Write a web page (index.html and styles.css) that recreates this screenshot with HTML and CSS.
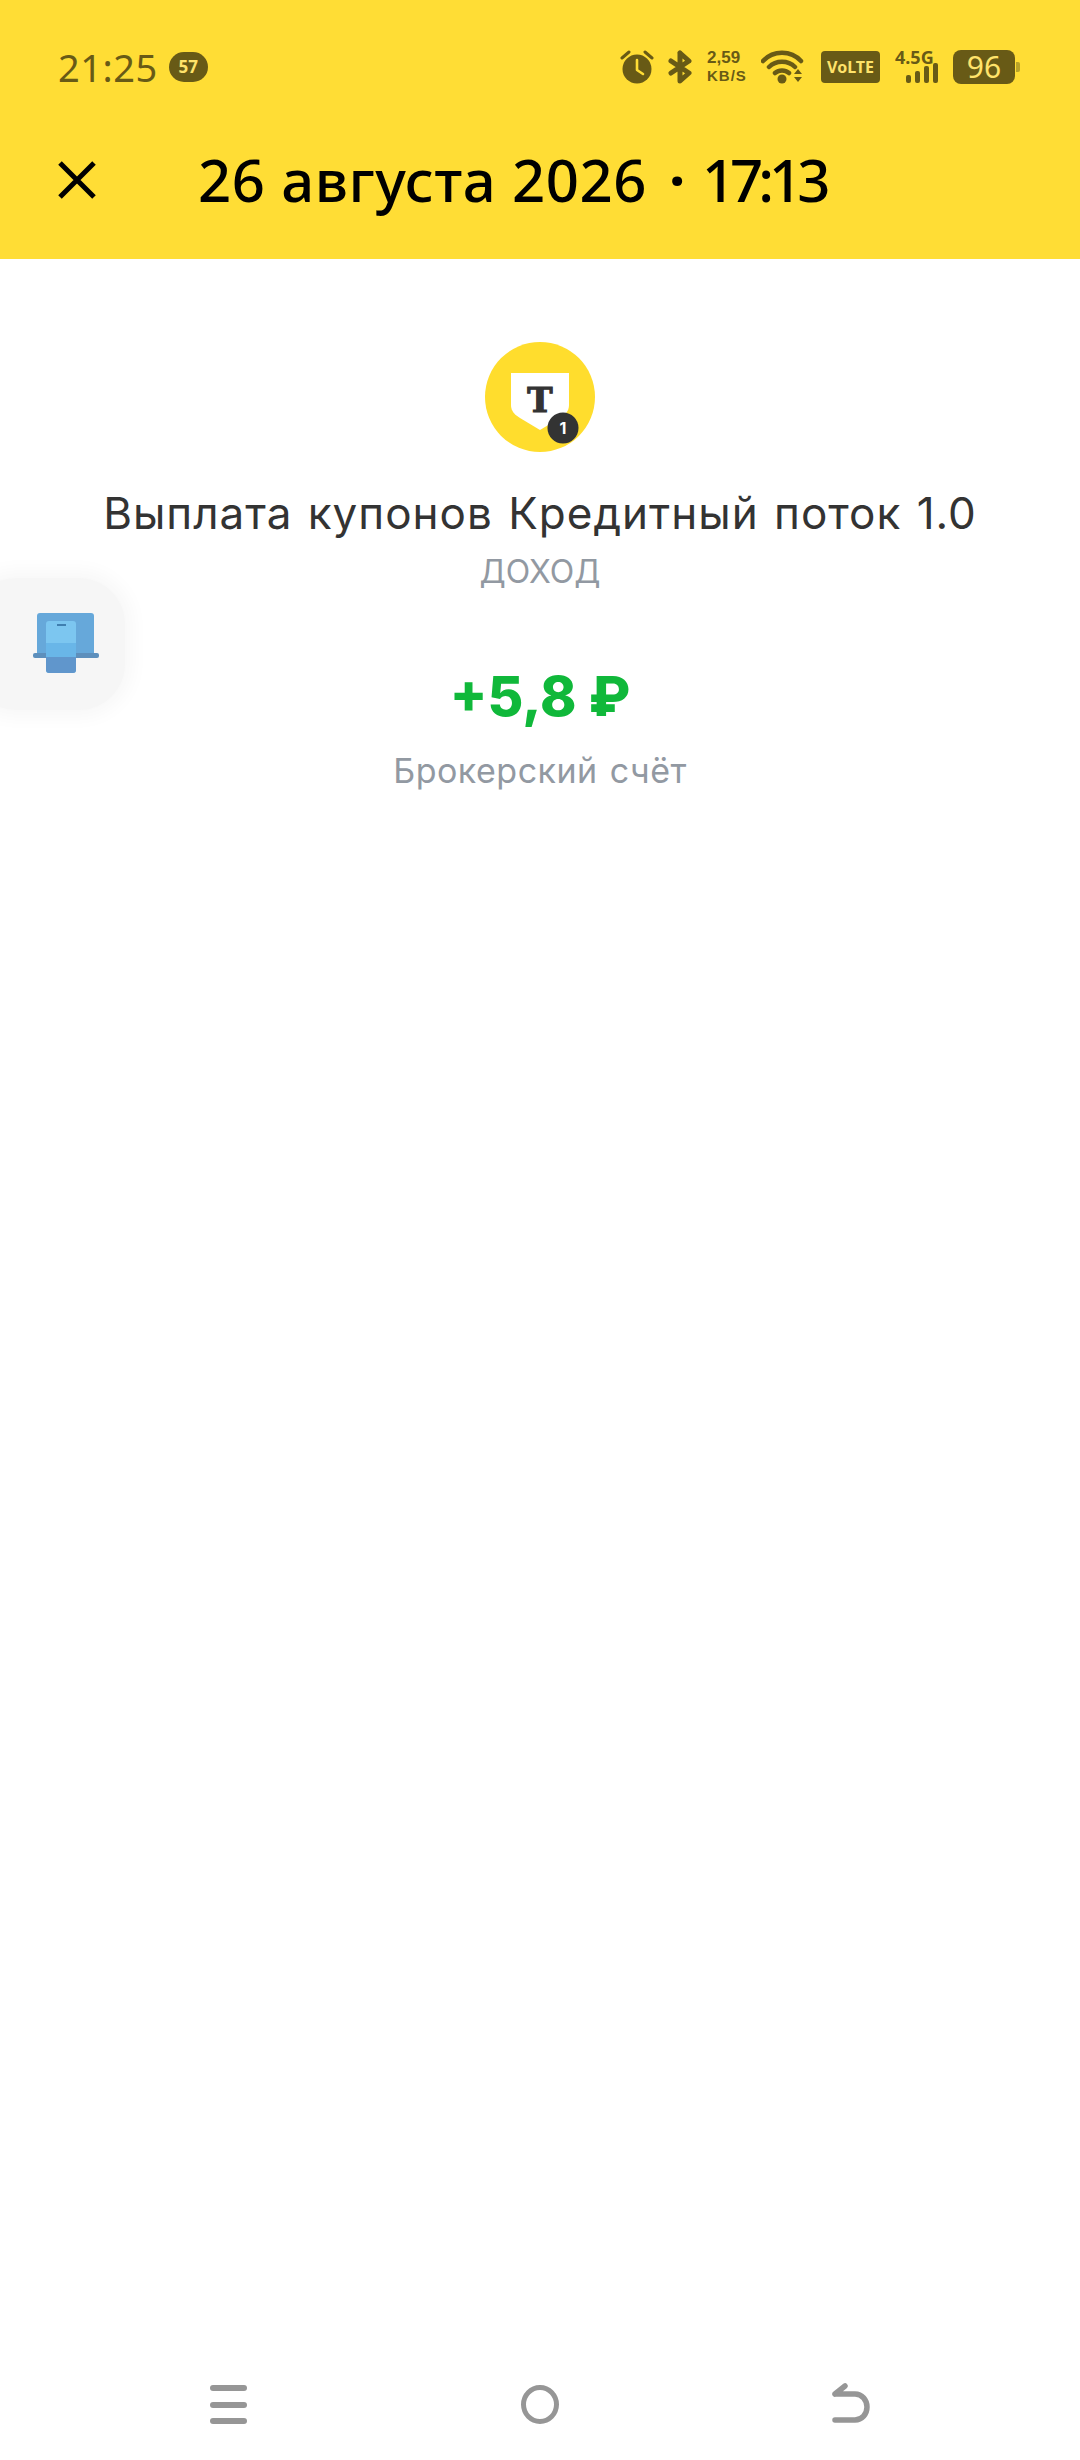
FILE: index.html
```html
<!DOCTYPE html>
<html lang="ru">
<head>
    <meta charset="UTF-8">
    <meta name="viewport" content="width=device-width, initial-scale=1.0">
    <title>Выплата купонов</title>
    <link rel="stylesheet" href="styles.css">
</head>
<body>
    <div class="screen">
        <header class="header">
            <div class="status-bar">
                <div class="status-left">
                    <span class="time">21:25</span>
                    <span class="notif-badge">57</span>
                </div>
                <div class="status-right">
                    <svg class="ico-alarm" width="34" height="34" viewBox="0 0 34 34">
                        <circle cx="17" cy="19" r="14.500" fill="#685a16"/>
                        <path d="M17 10v10l6 4" fill="none" stroke="#ffdd35" stroke-width="2.600" stroke-linecap="round" stroke-linejoin="round"/>
                        <path d="M2 8l7-6M32 8l-7-6" fill="none" stroke="#685a16" stroke-width="3" stroke-linecap="round"/>
                    </svg>
                    <svg class="ico-bt" width="24" height="34" viewBox="0 0 24 34">
                        <path d="M12 3v28l9-8-18-12M12 3l9 8-18 12" fill="none" stroke="#685a16" stroke-width="5" stroke-linejoin="round" stroke-linecap="round"/>
                    </svg>
                    <div class="net-speed">
                        <span>2,59</span>
                        <span class="net-unit">KB/S</span>
                    </div>
                    <svg class="ico-wifi" width="44" height="34" viewBox="0 0 44 34">
                        <path d="M2 11C12 0 30 0 40 11M8 17c7-7 19-7 26 0M14 23c4-3.500 10-3.500 14 0" fill="none" stroke="#685a16" stroke-width="4.500" stroke-linecap="round"/>
                        <circle cx="21" cy="29" r="4.500" fill="#685a16"/>
                        <path d="M33 24l4-5 4 5zM33 27h8l-4 5z" fill="#685a16"/>
                    </svg>
                    <span class="volte">VoLTE</span>
                    <div class="signal">
                        <span class="signal-label">4.5G</span>
                        <div class="signal-bars">
                            <i class="bar bar-1"></i>
                            <i class="bar bar-2"></i>
                            <i class="bar bar-3"></i>
                            <i class="bar bar-4"></i>
                        </div>
                    </div>
                    <div class="battery">
                        <span class="battery-level">96</span>
                        <i class="battery-tip"></i>
                    </div>
                </div>
            </div>
            <div class="toolbar">
                <svg class="ico-close" width="38" height="38" viewBox="0 0 38 38">
                    <path d="M2 2l34 34M36 2L2 36" fill="none" stroke="#000" stroke-width="5"/>
                </svg>
                <h1 class="toolbar-title">26 августа 2026<b class="title-dot">·</b><span class="title-time">17:13</span></h1>
            </div>
        </header>

        <main class="details">
            <div class="logo">
                <svg width="110" height="110" viewBox="0 0 110 110">
                    <circle cx="55" cy="55" r="55" fill="#ffdd2d"/>
                    <path d="M26 31h58v32c0 6-4 10-9 13L55 88 35 76c-5-3-9-7-9-13z" fill="#fff"/>
                    <text x="55" y="70" text-anchor="middle" class="logo-t">T</text>
                    <circle cx="78" cy="86" r="15.500" fill="#333"/>
                    <text x="78" y="92" text-anchor="middle" class="logo-num">1</text>
                </svg>
            </div>
            <div class="op-name">Выплата купонов Кредитный поток 1.0</div>
            <div class="op-type">ДОХОД</div>
            <div class="op-amount">+5,8 ₽</div>
            <div class="op-account">Брокерский счёт</div>
        </main>

        <nav class="nav-bar">
            <div class="nav-menu">
                <i></i>
                <i></i>
                <i></i>
            </div>
            <i class="nav-home"></i>
            <svg class="nav-back" width="38" height="40" viewBox="0 0 38 40">
                <path d="M3 37h20c7 0 12-6 12-13s-5-13-12-13H3M3 11l10-8" fill="none" stroke="#969696" stroke-width="5.500" stroke-linecap="round" stroke-linejoin="round"/>
            </svg>
        </nav>

        <div class="float-widget">
            <svg width="66" height="60" viewBox="0 0 66 60">
                <rect x="4" y="0" width="57" height="44" rx="3" fill="#66a8da"/>
                <rect x="0" y="40" width="66" height="5" rx="2" fill="#5d8fbc"/>
                <rect x="13" y="8" width="30" height="52" rx="3" fill="#7cc6f0"/>
                <rect x="13" y="30" width="30" height="14" fill="#69b6e8"/>
                <path d="M13 44h30v13a3 3 0 0 1-3 3H16a3 3 0 0 1-3-3z" fill="#6096cc"/>
                <rect x="24" y="11" width="9" height="2" fill="#3f7fb0"/>
            </svg>
        </div>
    </div>
</body>
</html>
```

FILE: styles.css
```css
* {
    box-sizing: border-box;
}
body {
    margin: 0;
    background: #fff;
    font-family: 'Noto Sans', sans-serif;
}
.screen {
    position: relative;
    width: 1080px;
    height: 2460px;
    display: flex;
    flex-direction: column;
    overflow: hidden;
}
.header {
    height: 259px;
    background-color: #ffdd35;
    flex-shrink: 0;
}
.status-bar {
    height: 130px;
    padding: 50px 60px 0 58px;
    display: flex;
    justify-content: space-between;
    align-items: flex-start;
    color: #685a16;
}
.status-left {
    display: flex;
    align-items: center;
    gap: 11px;
    height: 34px;
}
.time {
    font-size: 38px;
    line-height: 34px;
    letter-spacing: 0.5px;
}
.notif-badge {
    width: 39px;
    height: 30px;
    border-radius: 15px;
    background-color: #685a16;
    color: #ffe36a;
    font-size: 17px;
    font-weight: bold;
    line-height: 30px;
    text-align: center;
}
.status-right {
    display: flex;
    align-items: center;
    height: 34px;
}
.ico-alarm {
    margin-right: 14px;
}
.ico-bt {
    margin-right: 15px;
}
.net-speed {
    width: 40px;
    margin-right: 14px;
    display: flex;
    flex-direction: column;
    font-family: 'Liberation Sans', sans-serif;
    font-size: 17px;
    font-weight: bold;
    line-height: 18.5px;
}
.net-unit {
    font-size: 15px;
    letter-spacing: 1px;
    white-space: nowrap;
}
.ico-wifi {
    margin-right: 16px;
}
.volte {
    width: 59px;
    height: 32px;
    margin-right: 15px;
    border-radius: 4px;
    background-color: #685a16;
    color: #ffe36a;
    font-size: 16px;
    font-weight: bold;
    line-height: 32px;
    text-align: center;
}
.signal {
    position: relative;
    width: 44px;
    height: 34px;
    margin-right: 14px;
}
.signal-label {
    position: absolute;
    left: 0;
    top: -3px;
    font-size: 18px;
    font-weight: bold;
    line-height: 20px;
}
.signal-bars {
    position: absolute;
    right: 1px;
    bottom: 1px;
    display: flex;
    align-items: flex-end;
    gap: 4px;
}
.bar {
    width: 5px;
    border-radius: 2px;
    background-color: #685a16;
}
.bar-1 {
    height: 8px;
}
.bar-2 {
    height: 12px;
}
.bar-3 {
    height: 17px;
}
.bar-4 {
    height: 20px;
}
.battery {
    display: flex;
    align-items: center;
    gap: 1px;
}
.battery-level {
    width: 62px;
    height: 34px;
    border-radius: 8px;
    background-color: #685a16;
    color: #ffe36a;
    font-size: 30px;
    line-height: 34px;
    text-align: center;
}
.battery-tip {
    width: 4px;
    height: 10px;
    border-radius: 0 2px 2px 0;
    background-color: #b9a32a;
}
.toolbar {
    display: flex;
    align-items: center;
    gap: 102px;
    padding-left: 58px;
}
.toolbar-title {
    margin: 0;
    color: #000;
    font-size: 58px;
    font-weight: 500;
    letter-spacing: 0.6px;
    line-height: 100px;
    white-space: nowrap;
}
.title-dot {
    margin: 0 16px 0 22px;
    font-weight: bold;
}
.title-time {
    letter-spacing: -5px;
}
.details {
    padding-top: 83px;
    display: flex;
    flex-direction: column;
    align-items: center;
    text-align: center;
}
.logo {
    height: 110px;
    margin-bottom: 36px;
}
.logo svg {
    display: block;
}
.logo-t {
    font-family: 'DejaVu Serif', serif;
    font-size: 34px;
    font-weight: bold;
    fill: #333;
    stroke: #333;
    stroke-width: 1.2px;
}
.logo-num {
    font-family: 'Inter', sans-serif;
    font-size: 16px;
    font-weight: bold;
    fill: #fff;
}
.op-name {
    color: #333;
    font-family: 'Inter', sans-serif;
    font-size: 44px;
    letter-spacing: 1px;
    word-spacing: 2px;
    line-height: 50px;
}
.op-type {
    margin-top: 14px;
    color: #9299a2;
    font-family: 'Inter', sans-serif;
    font-size: 32px;
    line-height: 40px;
}
.op-amount {
    margin-top: 69px;
    color: #10b83a;
    font-family: 'Inter', sans-serif;
    font-size: 55px;
    font-weight: 800;
    line-height: 70px;
}
.op-account {
    margin-top: 20px;
    color: #9299a2;
    font-family: 'Inter', sans-serif;
    font-size: 34px;
    letter-spacing: 0.5px;
    word-spacing: 2px;
    line-height: 40px;
}
.nav-bar {
    margin-top: auto;
    height: 75px;
    padding: 0 210px;
    display: flex;
    justify-content: space-between;
    align-items: flex-start;
}
.nav-menu {
    width: 37px;
    height: 39px;
    display: flex;
    flex-direction: column;
    justify-content: space-between;
}
.nav-menu i {
    height: 6px;
    border-radius: 3px;
    background-color: #969696;
}
.nav-home {
    width: 38px;
    height: 39px;
    border: 5px solid #969696;
    border-radius: 50%;
}
.nav-back {
    margin-top: -2px;
}
.float-widget {
    position: absolute;
    left: -30px;
    top: 578px;
    width: 155px;
    height: 132px;
    padding: 35px 0 0 63px;
    border-radius: 46px;
    background-color: #f6f6f6;
    box-shadow: 0 0 18px 8px #f8f8f8;
}
.float-widget svg {
    filter: blur(0.6px);
}
```
